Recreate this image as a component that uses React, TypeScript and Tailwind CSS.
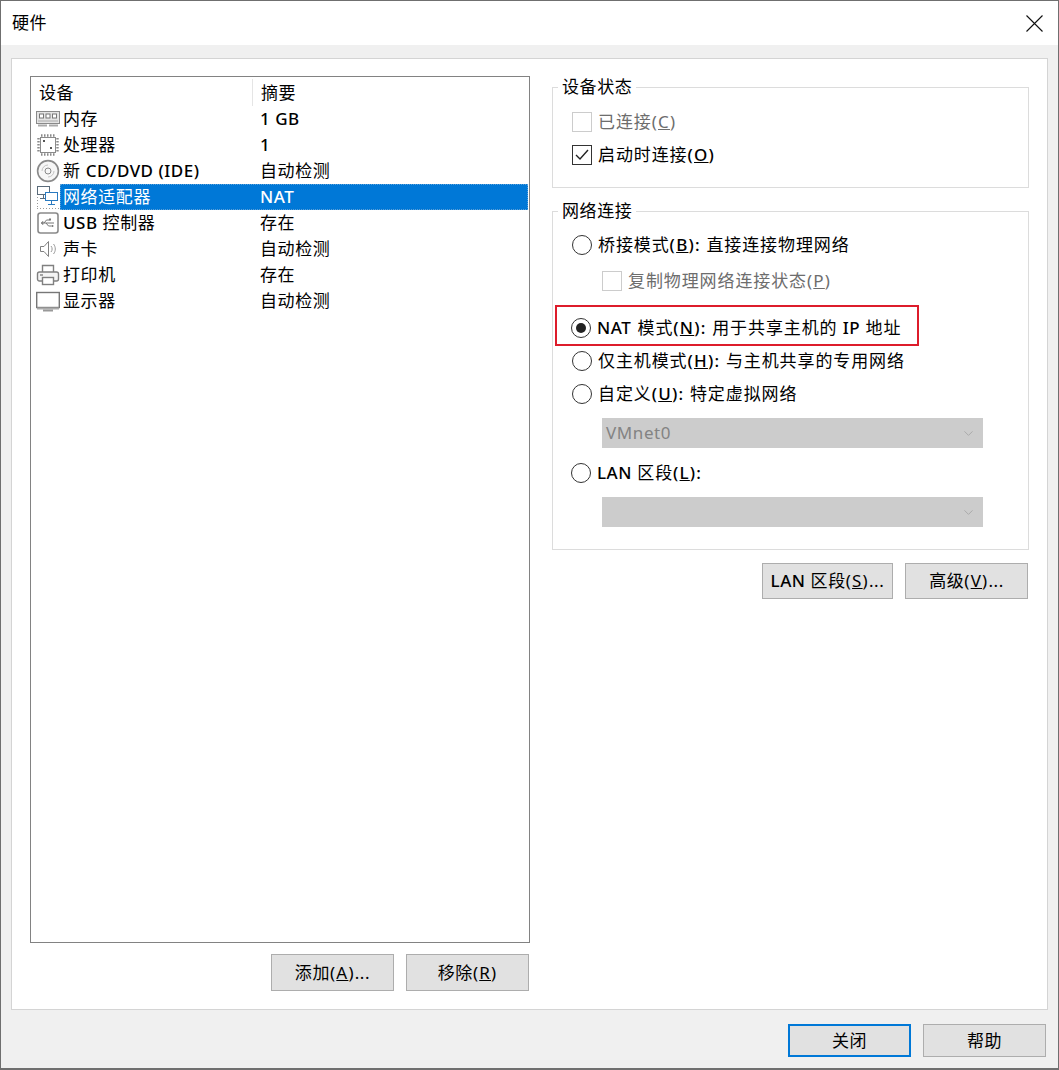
import type { ReactNode } from 'react';
import { ChevronDown } from 'lucide-react';

const fontStack = 'font-["Noto_Sans","Noto_Sans_CJK_SC",sans-serif]';

function MemoryIcon() {
    return (
        <svg width="24" height="20" viewBox="0 0 24 20" fill="none" stroke="#8a8a8a">
            <rect x="0.5" y="2.5" width="23" height="12" fill="#e4e4e4" />
            <rect x="3.5" y="5" width="4" height="4" fill="#fff" stroke="#777" />
            <rect x="10" y="5" width="4" height="4" fill="#fff" stroke="#777" />
            <rect x="16.5" y="5" width="4" height="4" fill="#fff" stroke="#777" />
            <path d="M2 12h20" stroke="#aaa" />
            <path d="M2 16.5h9M13 16.5h9" stroke="#aaa" strokeWidth="2" />
        </svg>
    );
}

function CpuIcon() {
    return (
        <svg width="24" height="24" viewBox="0 0 24 24" fill="none" stroke="#8a8a8a">
            <rect x="4.5" y="4.5" width="15" height="15" fill="#fff" />
            <path d="M5 2.5h14M5 21.5h14M2.5 5v14M21.5 5v14" strokeWidth="2.4" strokeDasharray="1.5 1.5" />
            <rect x="7" y="7" width="2" height="2" fill="#555" stroke="none" />
            <rect x="14" y="14" width="2" height="2" fill="#555" stroke="none" />
        </svg>
    );
}

function DiscIcon() {
    return (
        <svg width="24" height="24" viewBox="0 0 24 24" fill="none" stroke="#8a8a8a">
            <circle cx="12" cy="12" r="10.4" strokeWidth="1.6" fill="#f6f6f6" />
            <circle cx="12" cy="12" r="3" />
            <path d="M6 12a6 6 0 0 1 6-6M18 12a6 6 0 0 1-6 6" stroke="#c4c4c4" />
        </svg>
    );
}

function NetworkIcon() {
    return (
        <svg width="24" height="24" viewBox="0 0 24 24" fill="none">
            <rect x="1.5" y="1.5" width="12" height="8" fill="#fff" stroke="#5a6b7a" />
            <path d="M7.5 10v3M4 13.5h6" stroke="#5a6b7a" />
            <rect x="9.5" y="7.5" width="12" height="8" fill="#fff" stroke="#2a7ac0" />
            <path d="M15.5 16v3M12 19.5h7" stroke="#2a7ac0" />
            <path d="M1 23.5h22M1.5 12v11" stroke="#999" strokeDasharray="1 2" />
        </svg>
    );
}

function UsbIcon() {
    return (
        <svg width="22" height="24" viewBox="0 0 22 24" fill="none" stroke="#8a8a8a">
            <rect x="1" y="2" width="20" height="20" rx="2.5" strokeWidth="1.6" />
            <path d="M5 12h12M7 12l2.5-3h3M9 12l2.5 3h3" stroke="#777" />
            <path d="M4 12l2-1.5v3z" fill="#777" />
            <rect x="12" y="7.5" width="2" height="2" fill="#777" stroke="none" />
            <circle cx="15.5" cy="15" r="1" fill="#777" stroke="none" />
        </svg>
    );
}

function SpeakerIcon() {
    return (
        <svg width="22" height="24" viewBox="0 0 22 24" fill="none" stroke="#808080">
            <path d="M3.5 9.5h3.5l4.5-5v15l-4.5-5h-3.5z" fill="#fff" />
            <path d="M14 9c1.5 1.8 1.5 4.2 0 6M16.5 7c2.4 3 2.4 7 0 10" stroke="#999" />
        </svg>
    );
}

function PrinterIcon() {
    return (
        <svg width="24" height="24" viewBox="0 0 24 24" fill="none" stroke="#808080" strokeWidth="1.4">
            <path d="M6.5 9V2.5h11V9" fill="#fff" />
            <rect x="1.5" y="9" width="21" height="9" rx="2" fill="#f4f4f4" />
            <rect x="6.5" y="14.5" width="11" height="7" fill="#fff" />
            <path d="M4 12h3" />
        </svg>
    );
}

function MonitorIcon() {
    return (
        <svg width="24" height="24" viewBox="0 0 24 24" fill="none">
            <rect x="0.7" y="3.5" width="22.6" height="15" fill="#fff" stroke="#777" strokeWidth="1.4" />
            <path d="M1 19.5h22" stroke="#aaa" strokeWidth="2" />
            <path d="M7 21.5h10" stroke="#999" strokeWidth="2" />
        </svg>
    );
}

// Mnemonic such as (B), slightly heavier and wider than the CJK around it
function Key({ k, heavy, colon }: { k: string; heavy?: boolean; colon?: boolean }) {
    return (
        <span className={`tracking-[1.2px] ${heavy ? 'font-medium' : ''}`}>
            (<u>{k}</u>){colon ? ': ' : ''}
        </span>
    );
}

function Latin({ children }: { children: ReactNode }) {
    return <span className="font-medium tracking-[0.5px]">{children}</span>;
}

const devices: { icon: ReactNode; name: ReactNode; summary: ReactNode; selected?: boolean }[] = [
    { icon: <MemoryIcon />, name: '内存', summary: <Latin>1 GB</Latin> },
    { icon: <CpuIcon />, name: '处理器', summary: <Latin>1</Latin> },
    { icon: <DiscIcon />, name: <>新 <Latin>CD/DVD (IDE)</Latin></>, summary: '自动检测' },
    { icon: <NetworkIcon />, name: '网络适配器', summary: <Latin>NAT</Latin>, selected: true },
    { icon: <UsbIcon />, name: <><Latin>USB</Latin> 控制器</>, summary: '存在' },
    { icon: <SpeakerIcon />, name: '声卡', summary: '自动检测' },
    { icon: <PrinterIcon />, name: '打印机', summary: '存在' },
    { icon: <MonitorIcon />, name: '显示器', summary: '自动检测' },
];

function DeviceRow({ icon, name, summary, selected }: (typeof devices)[number]) {
    return (
        <div className="flex h-[26px] items-center pl-[5px]">
            <div className="flex w-[24px] shrink-0 justify-center">{icon}</div>
            <div className={selected ? 'flex h-[26px] flex-1 items-center bg-[#0078d7] text-white outline-1 -outline-offset-1 outline-dotted outline-[#5a9fd8]' : 'flex flex-1 items-center'}>
                <span className="w-[200px] shrink-0 pl-[3px]">{name}</span>
                <span>{summary}</span>
            </div>
        </div>
    );
}

function Button({ children, className = '' }: { children: ReactNode; className?: string }) {
    return (
        <button className={`flex items-center justify-center border border-[#adadad] bg-[#e1e1e1] text-black ${className}`}>
            {children}
        </button>
    );
}

function Checkbox({ checked, disabled }: { checked?: boolean; disabled?: boolean }) {
    return (
        <span className={`flex h-[20px] w-[20px] shrink-0 items-center justify-center border bg-white ${disabled ? 'border-[#cccccc]' : 'border-[#333]'}`}>
            {checked && (
                <svg width="14" height="12" viewBox="0 0 14 12" fill="none" stroke="#222" strokeWidth="1.4">
                    <path d="M1 6l4 4 8-9" />
                </svg>
            )}
        </span>
    );
}

function Radio({ checked }: { checked?: boolean }) {
    return (
        <span className="flex h-[20px] w-[20px] shrink-0 items-center justify-center rounded-full border border-[#333] bg-white">
            {checked && <span className="h-[10px] w-[10px] rounded-full bg-[#222]" />}
        </span>
    );
}

function OptionRow({ control, children, disabled, className = '' }: { control: ReactNode; children: ReactNode; disabled?: boolean; className?: string }) {
    return (
        <div className={`flex h-[33px] items-center tracking-[0.9px] ${disabled ? 'text-[#6d6d6d]' : ''} ${className}`}>
            {control}
            <span className="ml-[6px]">{children}</span>
        </div>
    );
}

function Select({ value }: { value?: string }) {
    return (
        <div className="ml-[30px] flex h-[30px] w-[381px] items-center justify-between bg-[#cccccc] pl-[4px] pr-[7px] text-[#838383]">
            <span>{value}</span>
            <ChevronDown className="h-[15px] w-[15px] text-[#a8a8a8]" strokeWidth={1.5} />
        </div>
    );
}

function Group({ title, children, className = '' }: { title: string; children: ReactNode; className?: string }) {
    return (
        <fieldset className={`border border-[#dcdcdc] px-[19px] ${className}`}>
            <legend className="-ml-[14px] px-[4px] leading-[22px]">{title}</legend>
            {children}
        </fieldset>
    );
}

export default function App() {
    return (
        <div className={`flex h-[1070px] w-[1059px] flex-col border border-b-2 border-[#6f6f6f] bg-[#f0f0f0] text-[17px] tracking-[0.6px] text-black ${fontStack}`}>
            <div className="flex h-[44px] shrink-0 items-center justify-between bg-white pl-[11px] pr-[15px]">
                <span>硬件</span>
                <svg width="17" height="17" viewBox="0 0 17 17" fill="none" stroke="#111" strokeWidth="1.1">
                    <path d="M0.5 0.5l16 16M16.5 0.5l-16 16" />
                </svg>
            </div>

            <div className="mx-[10px] mt-[13px] flex h-[952px] border border-[#d4d4d4] bg-white pl-[18px] pr-[18px] pt-[17px]">
                <div className="flex w-[500px] shrink-0 flex-col">
                    <div className="h-[867px] border border-[#828282] pr-[1px]">
                        <div className="flex h-[29px] items-center pt-[2px]">
                            <span className="w-[222px] border-r border-[#e5e5e5] pl-[8px] leading-[27px]">设备</span>
                            <span className="pl-[8px]">摘要</span>
                        </div>
                        {devices.map((d, i) => (
                            <DeviceRow key={i} {...d} />
                        ))}
                    </div>
                    <div className="mt-[11px] flex justify-end gap-[12px] pr-[1px]">
                        <Button className="h-[37px] w-[123px]">添加<Key k="A" />...</Button>
                        <Button className="h-[37px] w-[123px]">移除<Key k="R" /></Button>
                    </div>
                </div>

                <div className="ml-[22px] flex flex-1 flex-col">
                    <Group title="设备状态" className="h-[112px]">
                        <div className="pt-[7px]">
                            <OptionRow control={<Checkbox disabled />} disabled>已连接<Key k="C" /></OptionRow>
                            <OptionRow control={<Checkbox checked />}>启动时连接<Key k="O" heavy /></OptionRow>
                        </div>
                    </Group>
                    <Group title="网络连接" className="mt-[12px] h-[350px]">
                        <div className="pt-[6px]">
                            <OptionRow control={<Radio />}>桥接模式<Key k="B" heavy colon />直接连接物理网络</OptionRow>
                            <OptionRow control={<Checkbox disabled />} disabled className="ml-[30px] mt-[3px]">复制物理网络连接状态<Key k="P" /></OptionRow>
                            <div className="relative mt-[14px]">
                                <OptionRow control={<Radio checked />} className="-ml-[1px]">
                                    <Latin>NAT</Latin><span className="ml-[1px]"> 模式</span><Key k="N" heavy colon />用于共享主机的 <Latin>IP</Latin> 地址
                                </OptionRow>
                                <div className="absolute left-[-17px] top-[-6px] h-[41px] w-[364px] border-2 border-[#dd1c2b]" />
                            </div>
                            <OptionRow control={<Radio />}>仅主机模式<Key k="H" heavy colon />与主机共享的专用网络</OptionRow>
                            <OptionRow control={<Radio />}>自定义<Key k="U" heavy colon />特定虚拟网络</OptionRow>
                            <div className="mt-[8px]">
                                <Select value="VMnet0" />
                            </div>
                            <OptionRow control={<Radio />} className="mt-[8px] -ml-[1px]">
                                <Latin>LAN</Latin> 区段<Key k="L" heavy colon />
                            </OptionRow>
                            <div className="mt-[8px]">
                                <Select />
                            </div>
                        </div>
                    </Group>
                    <div className="mt-[13px] flex justify-end gap-[12px] pr-[1px]">
                        <Button className="h-[36px] w-[131px]"><Latin>LAN</Latin>&nbsp;区段<Key k="S" />...</Button>
                        <Button className="h-[36px] w-[123px]">高级<Key k="V" />...</Button>
                    </div>
                </div>
            </div>

            <div className="mt-[14px] flex justify-end gap-[12px] pr-[12px]">
                <button className="flex h-[33px] w-[123px] items-center justify-center border-2 border-[#0078d7] bg-[#e1e1e1]">关闭</button>
                <button className="flex h-[33px] w-[123px] items-center justify-center border border-[#adadad] bg-[#e1e1e1]">帮助</button>
            </div>
        </div>
    );
}
